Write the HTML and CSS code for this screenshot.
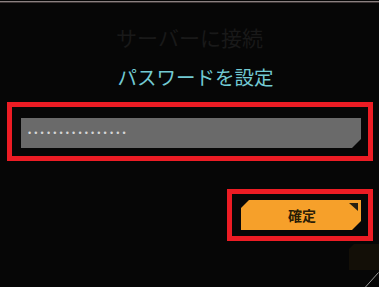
FILE: index.html
```html
<!DOCTYPE html>
<html lang="ja">
<head>
<meta charset="utf-8">
<link rel="stylesheet" href="styles.css">
</head>
<body>
<div class="screen">
  <div class="topline"></div>
  <h1 class="title">サーバーに接続</h1>
  <h2 class="subtitle">パスワードを設定</h2>
  <div class="frame frame-input">
    <div class="field"><span class="dots">••••••••••••••••</span></div>
  </div>
  <div class="frame frame-button">
    <button class="confirm">確定<span class="corner"></span></button>
  </div>
  <div class="deco-block"></div>
  <svg class="deco-line" width="14" height="15" viewBox="0 0 14 15"><line x1="0.5" y1="15" x2="13.5" y2="0.5" stroke="#9a9a9a" stroke-width="1"/></svg>
</div>
</body>
</html>
```
FILE: styles.css
```css
html, body {
  margin: 0;
  padding: 0;
  background: #060606;
}
.screen {
  position: relative;
  width: 379px;
  height: 287px;
  overflow: hidden;
  display: flex;
  flex-direction: column;
  font-family: "Noto Sans CJK JP", "Noto Sans", sans-serif;
}
.topline {
  margin-top: 1px;
  height: 1px;
  background: #8a8080;
  border-bottom: 1px solid #3c3434;
}
.title {
  margin: 21.5px 0 0 0;
  font-size: 21px;
  line-height: 24px;
  font-weight: 400;
  color: #191919;
  text-align: center;
  padding-left: 0;
}
.subtitle {
  margin: 16px 0 0 0;
  font-size: 19.5px;
  line-height: 24px;
  font-weight: 400;
  color: #72c9d2;
  text-align: center;
  padding-left: 12px;
}
.frame {
  border: 5px solid #ec1c24;
  box-sizing: border-box;
  background: #070707;
}
.frame-input {
  margin: 13.5px 0 0 7px;
  width: 366px;
  height: 59px;
  padding: 11px 7px 8px 9px;
}
.field {
  height: 30px;
  background: #6a6a6a;
  clip-path: polygon(0 0, 100% 0, 100% calc(100% - 9px), calc(100% - 9px) 100%, 0 100%);
  display: flex;
  align-items: center;
  padding-left: 7px;
}
.dots {
  font-family: "Liberation Sans", sans-serif;
  font-size: 9px;
  letter-spacing: 3.15px;
  color: #d6d6d6;
  line-height: 1;
}
.frame-button {
  margin: 28px 6px 0 auto;
  width: 146px;
  height: 52px;
  padding: 6px 7px 6px 9px;
}
.confirm {
  position: relative;
  display: block;
  width: 120px;
  height: 30px;
  border: 0;
  padding: 0;
  background: #f6a02a;
  clip-path: polygon(8px 0, 100% 0, 100% calc(100% - 9px), calc(100% - 9px) 100%, 0 100%, 0 8px);
  font-family: "Noto Sans CJK JP", sans-serif;
  font-size: 14px;
  font-weight: 700;
  color: #2a1c06;
  text-align: center;
  line-height: 30px;
  padding-left: 2px;
}
.corner {
  position: absolute;
  top: 3px;
  right: 3px;
  width: 9px;
  height: 8px;
  background: #2a2010;
  clip-path: polygon(0 0, 100% 0, 100% 100%);
}
.deco-block {
  margin: 3px 0 0 auto;
  width: 30px;
  height: 26px;
  background: #130f07;
  clip-path: polygon(5px 0, 100% 0, 100% 100%, 0 100%, 0 5px);
}
.deco-line {
  position: absolute;
  right: 0;
  bottom: 0;
}
```
